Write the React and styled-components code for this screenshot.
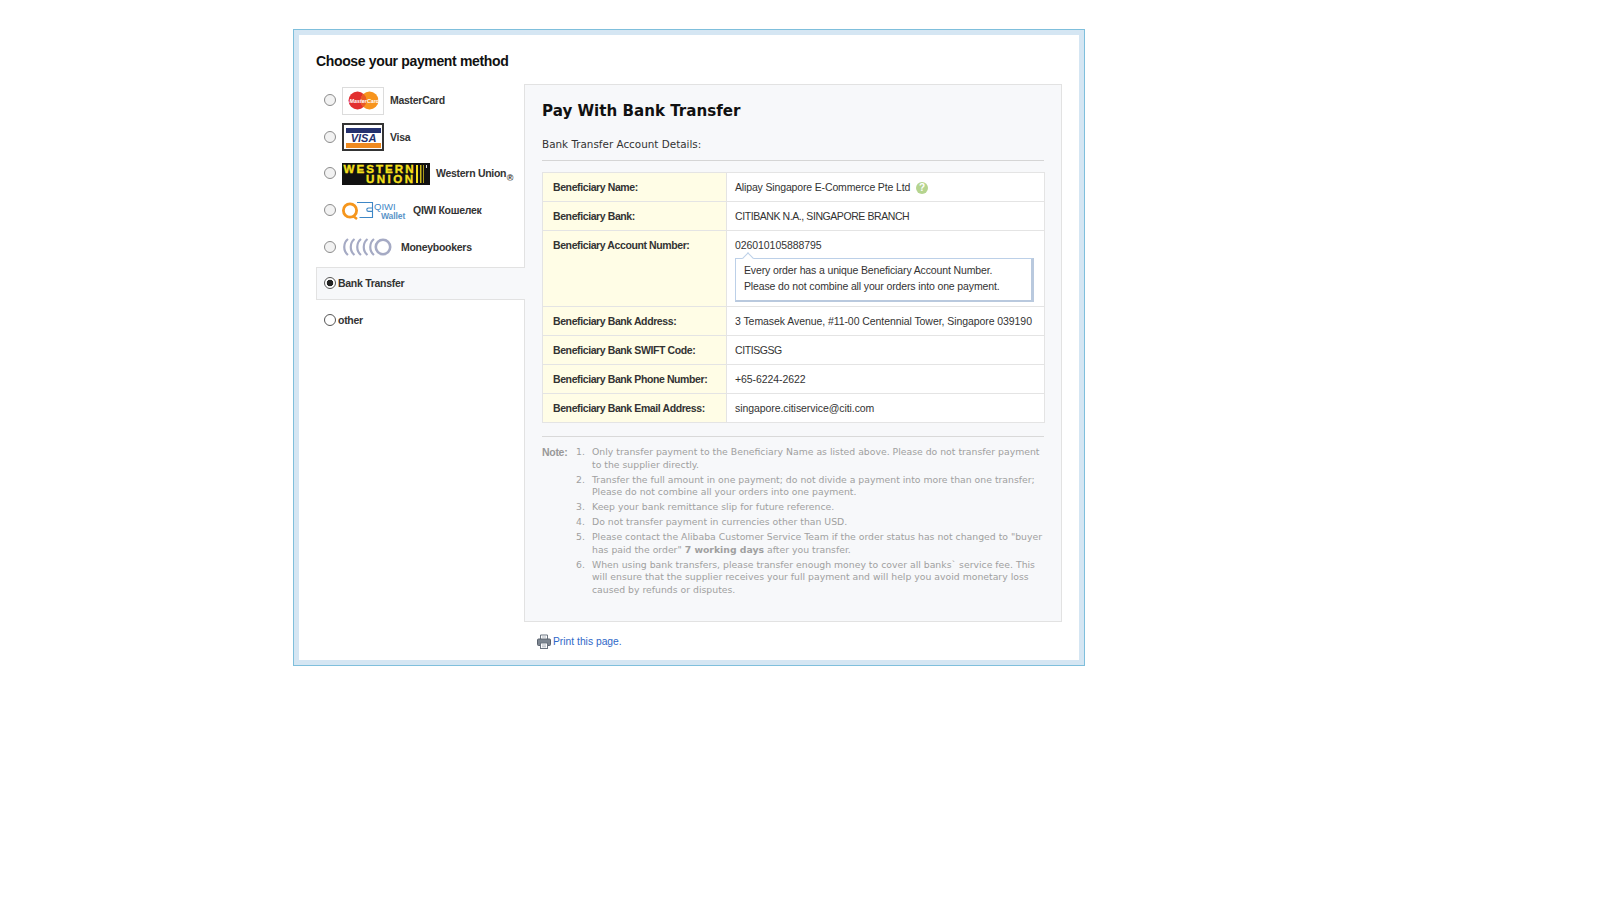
import React from "react";
import styled, { createGlobalStyle } from "styled-components";

const GlobalStyle = createGlobalStyle`
  html, body {
    margin: 0;
    padding: 0;
    background: #fff;
    font-family: "Liberation Sans", Arial, sans-serif;
    color: #333;
  }
`;

const Frame = styled.div`
  box-sizing: border-box;
  width: 792px;
  height: 637px;
  margin: 29px 0 0 293px;
  border: 1px solid #7fbfdc;
`;
const Inner = styled.div`
  box-sizing: border-box;
  height: 100%;
  border: 5px solid #d5e6f3;
  background: #fff;
  padding: 16px 17px 0;
`;
const Heading = styled.h2`
  margin: 0 0 13px;
  font-size: 14px;
  line-height: 20px;
  font-weight: 700;
  letter-spacing: -0.35px;
  color: #111;
`;
const Columns = styled.div`
  display: flex;
  align-items: flex-start;
`;
const MethodList = styled.div`
  width: 209px;
  margin-right: -1px;
  position: relative;
  z-index: 1;
  display: grid;
  grid-auto-rows: 33px;
  row-gap: 3.7px;
`;
const Method = styled.label`
  box-sizing: border-box;
  display: flex;
  align-items: center;
  padding-left: 7px;
  background: ${(p) => (p.$active ? "#f7f8fa" : "transparent")};
  border: 1px solid ${(p) => (p.$active ? "#e2e2e2" : "transparent")};
  border-right: 0;
`;
const Radio = styled.input`
  appearance: none;
  box-sizing: border-box;
  width: 12px;
  height: 12px;
  margin: -1px 6px 0 0;
  flex: none;
  border-radius: 50%;
  border: 1px solid ${(p) => (p.$dark ? "#555" : "#8c8c8c")};
  background: ${(p) => (p.$dark ? "#fff" : "#f2f2f2")};
  &:checked {
    background: radial-gradient(circle, #222 0 3px, #fff 3.6px);
  }
`;
const LogoBox = styled.span`
  box-sizing: border-box;
  width: 42px;
  height: 28px;
  flex: none;
  display: flex;
  align-items: center;
  justify-content: center;
  border: ${(p) => (p.$dark ? "2px solid #343434" : "1px solid #dcdcdc")};
`;
const MethodLabel = styled.span`
  position: relative;
  margin-top: -1px;
  margin-left: ${(p) => (p.$tight ? "-4px" : "6px")};
  font-size: 10.5px;
  font-weight: 700;
  letter-spacing: -0.28px;
  white-space: nowrap;
  color: #333;
`;
const Reg = styled.sup`
  position: absolute;
  right: -7px;
  top: 7px;
  font-size: 9px;
  line-height: 9px;
  letter-spacing: 0;
`;
const RightColumn = styled.div`
  width: 538px;
`;
const Panel = styled.div`
  box-sizing: border-box;
  height: 538px;
  padding: 16px 17px 0;
  background: #f7f8fa;
  border: 1px solid #e2e2e2;
`;
const Title = styled.h1`
  margin: 0;
  font-family: "DejaVu Sans", Verdana, sans-serif;
  font-size: 15.1px;
  line-height: 20px;
  font-weight: 700;
  color: #111;
`;
const Subtitle = styled.div`
  margin-top: 15px;
  padding-bottom: 8px;
  font-family: "DejaVu Sans", Verdana, sans-serif;
  font-size: 10.4px;
  line-height: 16px;
  color: #333;
  border-bottom: 1px solid #d5d5d5;
`;
const Table = styled.table`
  width: 503px;
  margin-top: 11px;
  border-collapse: collapse;
  table-layout: fixed;
  background: #fff;
  font-size: 10.5px;
`;
const Th = styled.th`
  width: 184px;
  box-sizing: border-box;
  padding: 0 10px;
  height: 29px;
  text-align: left;
  vertical-align: top;
  line-height: 28px;
  font-weight: 700;
  letter-spacing: -0.4px;
  color: #333;
  background: #fffde6;
  border: 1px solid #e4e4e4;
  white-space: nowrap;
`;
const Td = styled.td`
  box-sizing: border-box;
  padding: 0 8px;
  height: 29px;
  vertical-align: top;
  line-height: 28px;
  letter-spacing: ${(p) => (p.$caps ? "-0.42px" : "-0.07px")};
  color: #333;
  border: 1px solid #e4e4e4;
  white-space: nowrap;
`;
const NameText = styled.span`
  letter-spacing: -0.15px;
`;
const Help = styled.span`
  display: inline-block;
  width: 12px;
  height: 12px;
  margin-left: 6px;
  border-radius: 50%;
  background: #b5d48f;
  color: #fff;
  font-size: 10px;
  line-height: 12px;
  font-weight: 700;
  letter-spacing: 0;
  text-align: center;
  vertical-align: 0;
`;
const Tip = styled.div`
  position: relative;
  box-sizing: border-box;
  width: 299px;
  height: 44px;
  margin: -1px 0 4px;
  padding: 3px 8px 0;
  line-height: 16px;
  letter-spacing: -0.13px;
  background: #fff;
  border: 1px solid #bcd0e8;
  border-right: 3px solid #b9c9de;
  border-bottom: 2px solid #b9c9de;
  &::before {
    content: "";
    position: absolute;
    left: 8px;
    top: -5px;
    width: 7px;
    height: 7px;
    background: #fff;
    border: 1px solid #bcd0e8;
    border-right: 0;
    border-bottom: 0;
    transform: rotate(45deg);
  }
`;
const Notes = styled.div`
  display: flex;
  margin-top: 13px;
  padding-top: 9px;
  border-top: 1px solid #d9d9d9;
  font-family: "DejaVu Sans", Verdana, sans-serif;
  font-size: 9.3px;
  line-height: 12.5px;
  color: #a0a0a0;
`;
const NoteLabel = styled.div`
  flex: none;
  width: 50px;
  font-family: "Liberation Sans", Arial, sans-serif;
  font-size: 10.5px;
  letter-spacing: -0.3px;
  font-weight: 700;
  color: #999;
`;
const NoteList = styled.ol`
  margin: 0;
  padding: 0;
  list-style: none;
  counter-reset: note;
  flex: 1;
  li {
    position: relative;
    counter-increment: note;
    margin-bottom: 2.5px;
  }
  li::before {
    content: counter(note) ".";
    position: absolute;
    left: -16px;
  }
`;
const PrintLink = styled.a`
  display: flex;
  align-items: center;
  gap: 2px;
  margin: 12px 0 0 13px;
  font-size: 10.3px;
  line-height: 16px;
  color: #2f68c8;
  text-decoration: none;
  svg {
    margin-top: -2px;
  }
`;

function MasterCardLogo() {
  return (
    <svg width="31" height="19" viewBox="0 0 31 19">
      <circle cx="9.5" cy="9.5" r="9" fill="#e2302f" />
      <circle cx="21.5" cy="9.5" r="9" fill="#f7941d" />
      <path d="M15.5 2.8a9 9 0 0 1 0 13.4a9 9 0 0 1 0-13.4z" fill="#ea5a26" />
      <text x="1.5" y="11.5" fontSize="5.4" fontWeight="700" fontStyle="italic" fill="#fff" fontFamily="Liberation Sans">MasterCard</text>
    </svg>
  );
}

function VisaLogo() {
  return (
    <svg width="37" height="23" viewBox="0 0 37 23">
      <rect width="37" height="23" fill="#fff" />
      <rect x="1" y="2" width="35" height="5" fill="#24306e" />
      <rect x="1" y="17" width="35" height="5" fill="#ef8a1f" />
      <text x="18.5" y="16" textAnchor="middle" fontSize="11" fontWeight="700" fontStyle="italic" fill="#24306e" fontFamily="Liberation Sans">VISA</text>
    </svg>
  );
}

function WesternUnionLogo() {
  return (
    <svg width="88" height="22" viewBox="0 0 88 22">
      <rect width="88" height="22" fill="#111" />
      <g fontSize="11.6" fontWeight="700" fill="#f6e01c" stroke="#f6e01c" strokeWidth="0.35" fontFamily="Liberation Sans">
        <text x="1.5" y="10" textLength="70">WESTERN</text>
        <text x="24" y="20" textLength="47">UNION</text>
      </g>
      <rect x="74" y="2" width="2" height="18" fill="#f6e01c" />
      <rect x="78" y="2" width="1.5" height="18" fill="#c9b61c" />
      <rect x="81" y="2" width="1" height="18" fill="#a8981c" />
      <rect x="84" y="2" width="1" height="3" fill="#ddd" />
    </svg>
  );
}

function QiwiLogo() {
  return (
    <svg width="65" height="19" viewBox="0 0 65 19">
      <circle cx="8" cy="9.5" r="6.6" fill="none" stroke="#f5961d" strokeWidth="2.8" />
      <path d="M11 15l4 3" stroke="#f5961d" strokeWidth="2.4" fill="none" />
      <path d="M15 1.5h15.5v15h-13" fill="none" stroke="#3e87c6" strokeWidth="1.1" />
      <path d="M30 7h-3.5a1.7 1.7 0 0 0 0 3.4h3.5" fill="none" stroke="#3e87c6" strokeWidth="1.1" />
      <text x="32" y="8.5" fontSize="9.5" fill="#3e87c6" fontFamily="Liberation Sans">QIWI</text>
      <text x="39" y="17.5" fontSize="8.5" fontWeight="700" letterSpacing="-0.1" fill="#5a94c8" fontFamily="Liberation Sans">Wallet</text>
    </svg>
  );
}

function MoneybookersLogo() {
  return (
    <svg width="53" height="18" viewBox="0 0 53 18">
      <g fill="none" stroke="#a5aac4" strokeWidth="2.2">
        <path d="M6 1c-5 4-5 12 0 16" />
        <path d="M12.5 1c-5 4-5 12 0 16" />
        <path d="M19 1c-5 4-5 12 0 16" />
        <path d="M25.5 1c-5 4-5 12 0 16" />
        <path d="M32 1c-5 4-5 12 0 16" />
        <circle cx="41" cy="9" r="7.2" strokeWidth="2.6" />
      </g>
    </svg>
  );
}

function PrinterIcon() {
  return (
    <svg width="14" height="15" viewBox="0 0 14 15">
      <path d="M3.5 5V1h7v4" fill="#fff" stroke="#6b7480" />
      <rect x="0.5" y="5" width="13" height="6.5" rx="1" fill="#7d8691" stroke="#5b636e" />
      <rect x="3.5" y="9" width="7" height="5.5" fill="#fff" stroke="#6b7480" />
      <path d="M5 11h4M5 12.8h4M5 3h4" stroke="#9aa2ad" strokeWidth="0.8" />
    </svg>
  );
}

const methods = [
  { id: "mc", label: "MasterCard", logo: <LogoBox><MasterCardLogo /></LogoBox> },
  { id: "visa", label: "Visa", logo: <LogoBox $dark><VisaLogo /></LogoBox> },
  { id: "wu", label: "Western Union", logo: <WesternUnionLogo />, reg: true },
  { id: "qiwi", label: "QIWI Кошелек", logo: <QiwiLogo /> },
  { id: "mb", label: "Moneybookers", logo: <MoneybookersLogo /> },
  { id: "bank", label: "Bank Transfer", active: true },
  { id: "other", label: "other" },
];

const notes = [
  <>Only transfer payment to the Beneficiary Name as listed above. Please do not transfer payment to the supplier directly.</>,
  <>Transfer the full amount in one payment; do not divide a payment into more than one transfer; Please do not combine all your orders into one payment.</>,
  <>Keep your bank remittance slip for future reference.</>,
  <>Do not transfer payment in currencies other than USD.</>,
  <>Please contact the Alibaba Customer Service Team if the order status has not changed to "buyer has paid the order" <b>7 working days</b> after you transfer.</>,
  <>When using bank transfers, please transfer enough money to cover all banks` service fee. This will ensure that the supplier receives your full payment and will help you avoid monetary loss caused by refunds or disputes.</>,
];

export default function App() {
  return (
    <>
      <GlobalStyle />
      <Frame>
        <Inner>
          <Heading>Choose your payment method</Heading>
          <Columns>
            <MethodList>
              {methods.map((m) => (
                <Method key={m.id} $active={m.active}>
                  <Radio type="radio" name="method" checked={!!m.active} readOnly $dark={!m.logo} />
                  {m.logo}
                  <MethodLabel $tight={!m.logo}>
                    {m.label}
                    {m.reg && <Reg>®</Reg>}
                  </MethodLabel>
                </Method>
              ))}
            </MethodList>
            <RightColumn>
              <Panel>
                <Title>Pay With Bank Transfer</Title>
                <Subtitle>Bank Transfer Account Details:</Subtitle>
                <Table>
                  <tbody>
                    <tr>
                      <Th>Beneficiary Name:</Th>
                      <Td>
                        <NameText>Alipay Singapore E-Commerce Pte Ltd</NameText>
                        <Help>?</Help>
                      </Td>
                    </tr>
                    <tr>
                      <Th>Beneficiary Bank:</Th>
                      <Td $caps>CITIBANK N.A., SINGAPORE BRANCH</Td>
                    </tr>
                    <tr>
                      <Th>Beneficiary Account Number:</Th>
                      <Td>
                        026010105888795
                        <Tip>
                          Every order has a unique Beneficiary Account Number.
                          <br />
                          Please do not combine all your orders into one payment.
                        </Tip>
                      </Td>
                    </tr>
                    <tr>
                      <Th>Beneficiary Bank Address:</Th>
                      <Td>3 Temasek Avenue, #11-00 Centennial Tower, Singapore 039190</Td>
                    </tr>
                    <tr>
                      <Th>Beneficiary Bank SWIFT Code:</Th>
                      <Td $caps>CITISGSG</Td>
                    </tr>
                    <tr>
                      <Th>Beneficiary Bank Phone Number:</Th>
                      <Td>+65-6224-2622</Td>
                    </tr>
                    <tr>
                      <Th>Beneficiary Bank Email Address:</Th>
                      <Td>singapore.citiservice@citi.com</Td>
                    </tr>
                  </tbody>
                </Table>
                <Notes>
                  <NoteLabel>Note:</NoteLabel>
                  <NoteList>
                    {notes.map((n, i) => (
                      <li key={i}>{n}</li>
                    ))}
                  </NoteList>
                </Notes>
              </Panel>
              <PrintLink href="#">
                <PrinterIcon />
                Print this page.
              </PrintLink>
            </RightColumn>
          </Columns>
        </Inner>
      </Frame>
    </>
  );
}
